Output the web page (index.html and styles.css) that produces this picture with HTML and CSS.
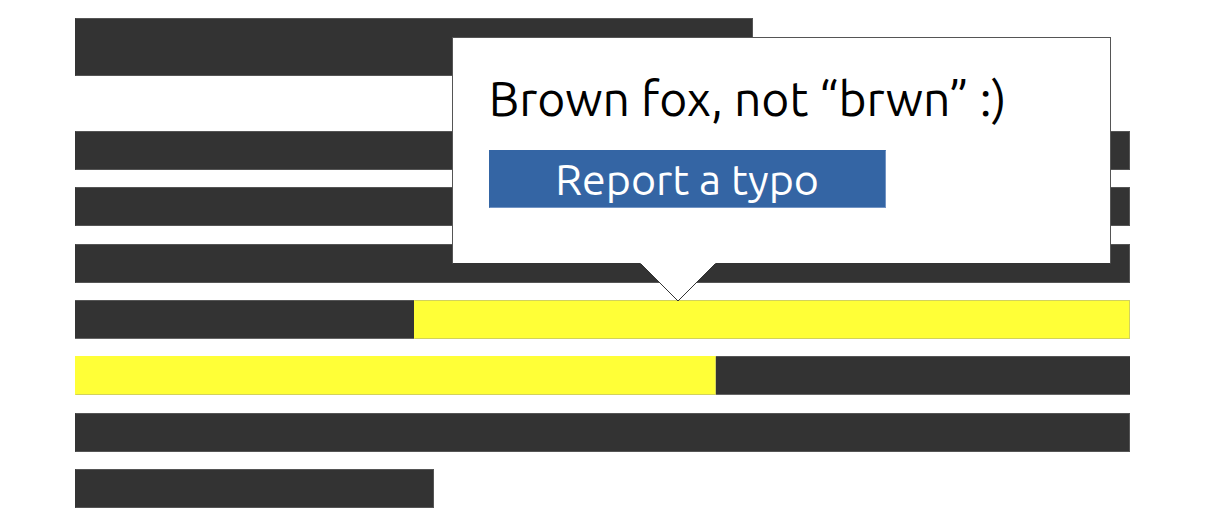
FILE: index.html
```
<!DOCTYPE html>
<html lang="en">
<head>
<meta charset="utf-8">
<title>Report a typo</title>
<link rel="stylesheet" href="styles.css">
</head>
<body>
<main class="page">
  <div class="headline"></div>
  <div class="paragraph">
    <div class="line"></div>
    <div class="line"></div>
    <div class="line"></div>
    <div class="line line-split">
      <span class="plain-start"></span>
      <div class="marked marked-end">
        <section class="callout">
          <p class="message">Brown fox, not “brwn” :)</p>
          <button class="report" type="button">Report a typo</button>
          <svg class="tail" viewBox="0 0 76 39" aria-hidden="true">
            <path d="M0 0L38 38L76 0Z" fill="#fff"/>
            <path d="M0.5 0.5L38 38L75.5 0.5" fill="none" stroke="#333" stroke-width="1"/>
          </svg>
        </section>
      </div>
    </div>
    <div class="line line-split">
      <div class="marked marked-start"></div>
      <span class="plain-end"></span>
    </div>
    <div class="line"></div>
    <div class="line line-last"></div>
  </div>
</main>
</body>
</html>
```
FILE: styles.css
```
* {
  box-sizing: border-box;
}

body {
  margin: 0;
  background: #fff;
  color: #000;
  font-family: Ubuntu, "Noto Sans", sans-serif;
}

.page {
  display: flex;
  flex-direction: column;
  gap: 55px;
  min-height: 100vh;
  padding: 18px 75px 19px;
}

.headline {
  width: 64.3%;
  height: 58px;
  background: #333;
  border: 1px solid #555;
  border-left-color: #333;
}

.paragraph {
  display: flex;
  flex: 1;
  flex-direction: column;
  justify-content: space-between;
  gap: 16px;
}

.line {
  height: 39px;
  background: #333;
  border: 1px solid #555;
  border-left-color: #333;
}

.line-split {
  display: flex;
  background: none;
  border: 0;
}

.line-last {
  width: 34%;
}

.plain-start,
.plain-end {
  background: #333;
  border-top: 1px solid #555;
  border-bottom: 1px solid #666;
}

.plain-start {
  flex: 339;
}

.plain-end {
  flex: 414;
}

.marked {
  background: #ffff37;
  border: 1px solid #d2d25c;
  border-left-color: #ffff37;
}

.marked-end {
  position: relative;
  flex: 715;
}

.marked-start {
  flex: 640;
  border-top-color: #ffff37;
}

.callout {
  position: absolute;
  bottom: calc(100% + 37px);
  left: 37px;
  width: 92.3%;
  padding: 30px 36px 55px;
  background: #fff;
  border: 1px solid #555;
  border-bottom-color: #333;
}

.message {
  margin: 0 0 22px;
  font-size: 48px;
  line-height: 60px;
  white-space: nowrap;
}

.report {
  display: block;
  width: 397px;
  max-width: 100%;
  height: 58px;
  padding: 0;
  background: #3465a4;
  border: 1px solid #3465a4;
  border-right-color: #7294c4;
  border-bottom-color: #7294c4;
  color: #fff;
  font: inherit;
  font-size: 43px;
  line-height: 56px;
}

.tail {
  position: absolute;
  top: 100%;
  left: 187px;
  width: 76px;
  height: 39px;
}
```
